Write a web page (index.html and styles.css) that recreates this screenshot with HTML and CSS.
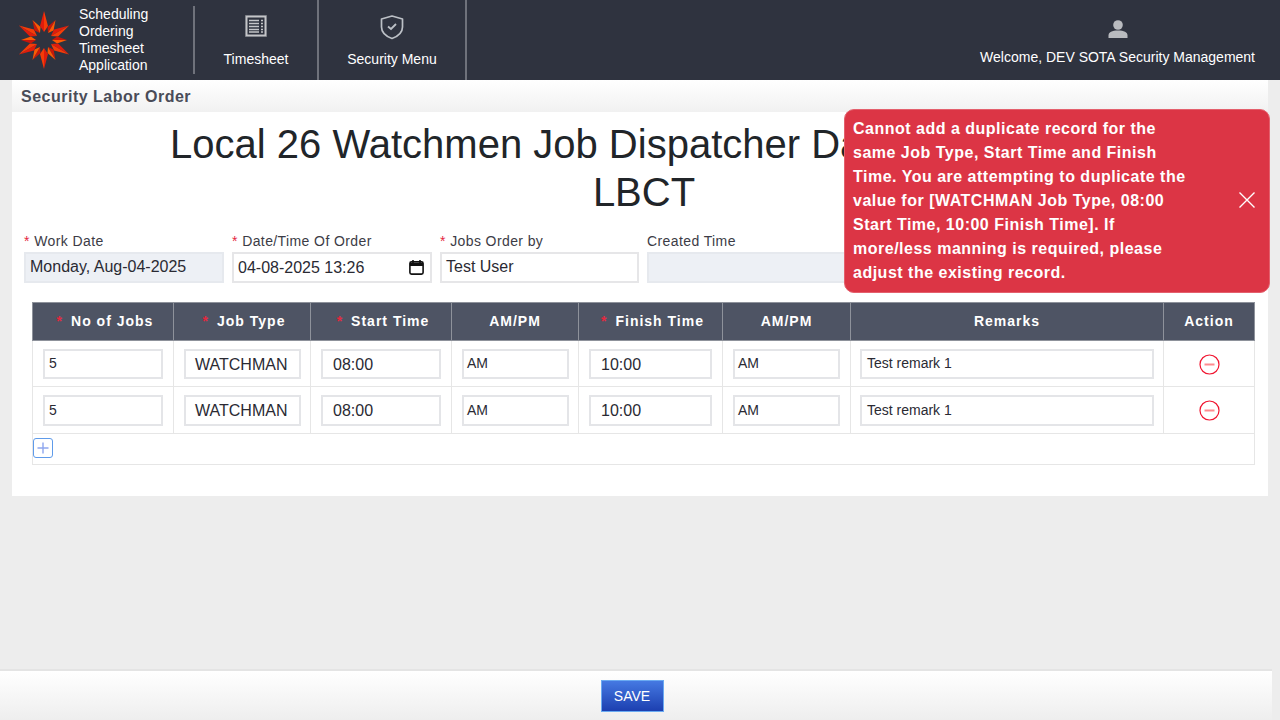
FILE: index.html
```html
<!DOCTYPE html>
<html lang="en">
<head>
<meta charset="utf-8">
<title>Security Labor Order</title>
<link rel="stylesheet" href="styles.css">
</head>
<body>
<div class="app">
  <header class="topbar">
    <div class="brand">
      <svg class="logo" viewBox="-27 -30 54 60" width="54" height="60" aria-hidden="true">
        <defs>
          <g id="spike-long"><polygon points="0,-29 -4,-14 0,-8" fill="#e01c0c"/><polygon points="0,-29 4,-14 0,-8" fill="#f63c08"/></g>
          <g id="spike-mid"><polygon points="0,-23 -3.5,-13 0,-8" fill="#c8160a"/><polygon points="0,-23 3.5,-13 0,-8" fill="#fb5a04"/></g>
        </defs>
        <use href="#spike-long"/>
        <use href="#spike-mid" transform="rotate(30)"/>
        <use href="#spike-long" transform="rotate(60)"/>
        <use href="#spike-mid" transform="rotate(90)"/>
        <use href="#spike-long" transform="rotate(120)"/>
        <use href="#spike-mid" transform="rotate(150)"/>
        <use href="#spike-long" transform="rotate(180)"/>
        <use href="#spike-mid" transform="rotate(210)"/>
        <use href="#spike-long" transform="rotate(240)"/>
        <use href="#spike-mid" transform="rotate(270)"/>
        <use href="#spike-long" transform="rotate(300)"/>
        <use href="#spike-mid" transform="rotate(330)"/>
      </svg>
      <div class="brand-text">Scheduling<br>Ordering<br>Timesheet<br>Application</div>
    </div>
    <nav class="nav">
      <a class="nav-item nav-timesheet">
        <svg class="nav-icon" viewBox="0 0 24 24" width="24" height="24" aria-hidden="true">
          <rect x="2.5" y="2.5" width="19" height="19" fill="none" stroke="#c4c5c8" stroke-width="2"/>
          <rect x="1.5" y="1.5" width="21" height="21" fill="none" stroke="#8f9196" stroke-width="1" stroke-dasharray="1 1"/>
          <path d="M5 6.5h10M5 9.5h10M5 12.5h10M5 15.5h10M5 18h10M17 6.5h2M17 9.5h2M17 12.5h2M17 15.5h2M17 18h2" stroke="#c4c5c8" stroke-width="1.4" fill="none"/>
        </svg>
        <span>Timesheet</span>
      </a>
      <a class="nav-item nav-security">
        <svg class="nav-icon" viewBox="0 0 24 26" width="24" height="26" aria-hidden="true">
          <path d="M12 2 L22.5 5 V13 C22.5 19 17.5 22.5 12 24.5 C6.5 22.5 1.5 19 1.5 13 V5 Z" fill="none" stroke="#bcc0c6" stroke-width="1.7" stroke-linejoin="round"/>
          <path d="M8 12.5 L11 15 L16 10" fill="none" stroke="#bcc0c6" stroke-width="1.8"/>
        </svg>
        <span>Security Menu</span>
      </a>
    </nav>
    <div class="user">
      <svg viewBox="0 0 20 18" width="20" height="18" aria-hidden="true">
        <circle cx="10" cy="5" r="4.8" fill="#b9bbbf"/>
        <path d="M0.5 18 V15.5 C0.5 12 4 10.5 10 10.5 C16 10.5 19.5 12 19.5 15.5 V18 Z" fill="#b9bbbf"/>
      </svg>
      <span>Welcome, DEV SOTA Security Management</span>
    </div>
  </header>

  <main class="main">
    <div class="crumb">Security Labor Order</div>
    <section class="card">
      <h1 class="title">Local 26 Watchmen Job Dispatcher Daily Order Form<br>LBCT</h1>
      <div class="form-row">
        <div class="form-col">
          <label class="label"><span class="req">*</span> Work Date</label>
          <div class="box box-disabled">Monday, Aug-04-2025</div>
        </div>
        <div class="form-col">
          <label class="label"><span class="req">*</span> Date/Time Of Order</label>
          <div class="box box-date">
            <span>04-08-2025 13:26</span>
            <svg viewBox="0 0 15 15" width="15" height="15" aria-hidden="true">
              <rect x="0.9" y="1.9" width="13.2" height="12.2" rx="1.6" fill="none" stroke="#111" stroke-width="1.6"/>
              <path d="M1 3h13v3H1z" fill="#111"/>
              <path d="M4 0v3M11 0v3" stroke="#111" stroke-width="1.6"/>
            </svg>
          </div>
        </div>
        <div class="form-col form-col-narrow">
          <label class="label"><span class="req">*</span> Jobs Order by</label>
          <div class="box">Test User</div>
        </div>
        <div class="form-col">
          <label class="label">Created Time</label>
          <div class="box box-disabled"></div>
        </div>
      </div>

      <table class="grid">
        <colgroup>
          <col class="c-jobs"><col class="c-type"><col class="c-start"><col class="c-ampm1"><col class="c-finish"><col class="c-ampm2"><col class="c-remarks"><col class="c-action">
        </colgroup>
        <thead>
          <tr>
            <th class="th-req"><span class="req">*</span><span class="gap"></span>No of Jobs</th>
            <th class="th-req"><span class="req">*</span><span class="gap"></span>Job Type</th>
            <th class="th-req"><span class="req">*</span><span class="gap"></span>Start Time</th>
            <th>AM/PM</th>
            <th class="th-req"><span class="req">*</span><span class="gap"></span>Finish Time</th>
            <th>AM/PM</th>
            <th>Remarks</th>
            <th>Action</th>
          </tr>
        </thead>
        <tbody>
          <tr>
            <td><div class="cell cell-sm">5</div></td>
            <td class="td-type"><div class="cell cell-lg">WATCHMAN</div></td>
            <td><div class="cell cell-lg">08:00</div></td>
            <td class="td-am"><div class="cell cell-sm cell-am">AM</div></td>
            <td><div class="cell cell-lg">10:00</div></td>
            <td><div class="cell cell-sm cell-am">AM</div></td>
            <td class="td-remark"><div class="cell cell-sm cell-remark">Test remark 1</div></td>
            <td class="td-action">
              <svg viewBox="0 0 21 21" width="21" height="21" aria-hidden="true"><circle cx="10.5" cy="10.5" r="9.5" fill="none" stroke="#f0142f" stroke-width="1.2"/><path d="M5.5 10.5h10" stroke="#ff8a8f" stroke-width="2"/></svg>
            </td>
          </tr>
          <tr>
            <td><div class="cell cell-sm">5</div></td>
            <td class="td-type"><div class="cell cell-lg">WATCHMAN</div></td>
            <td><div class="cell cell-lg">08:00</div></td>
            <td class="td-am"><div class="cell cell-sm cell-am">AM</div></td>
            <td><div class="cell cell-lg">10:00</div></td>
            <td><div class="cell cell-sm cell-am">AM</div></td>
            <td class="td-remark"><div class="cell cell-sm cell-remark">Test remark 1</div></td>
            <td class="td-action">
              <svg viewBox="0 0 21 21" width="21" height="21" aria-hidden="true"><circle cx="10.5" cy="10.5" r="9.5" fill="none" stroke="#f0142f" stroke-width="1.2"/><path d="M5.5 10.5h10" stroke="#ff8a8f" stroke-width="2"/></svg>
            </td>
          </tr>
        </tbody>
        <tfoot>
          <tr>
            <td class="td-add" colspan="8">
              <span class="add-btn">
                <svg viewBox="0 0 12 12" width="12" height="12" aria-hidden="true"><path d="M6 0.5v11M0.5 6h11" stroke="#8ea6ee" stroke-width="1.4"/></svg>
              </span>
            </td>
          </tr>
        </tfoot>
      </table>
    </section>
  </main>

  <footer class="footer">
    <button class="save" type="button">SAVE</button>
  </footer>

  <div class="toast" role="alert">
    <p class="toast-msg">Cannot add a duplicate record for the same Job Type, Start Time and Finish Time. You are attempting to duplicate the value for [WATCHMAN Job Type, 08:00 Start Time, 10:00 Finish Time]. If more/less manning is required, please adjust the existing record.</p>
    <svg class="toast-x" viewBox="0 0 16 16" width="16" height="16" aria-hidden="true"><path d="M0.5 0.5L15.5 15.5M15.5 0.5L0.5 15.5" stroke="#fff" stroke-width="1.4"/></svg>
  </div>
</div>
</body>
</html>
```

FILE: styles.css
```css
* { box-sizing: border-box; }
html, body { margin: 0; padding: 0; height: 100%; overflow: hidden; }
body { font-family: "Liberation Sans", Arial, sans-serif; background: #ededed; color: #212529; }
.app { position: relative; display: flex; flex-direction: column; height: 720px; }

/* Header */
.topbar { display: flex; height: 80px; flex: none; background: #2f333f; color: #fff; font-size: 14px; }
.brand { display: flex; align-items: center; width: 195px; height: 68px; margin-top: 6px; padding-left: 17px; border-right: 2px solid #6f727b; }
.logo { flex: none; margin-top: -1px; }
.brand-text { margin-left: 8px; line-height: 17px; }
.nav { display: flex; }
.nav-item { display: flex; flex-direction: column; align-items: center; height: 80px; padding-top: 14px; border-right: 2px solid #6f727b; color: #fff; }
.nav-item span { margin-top: auto; margin-bottom: 13px; line-height: 16px; }
.nav-timesheet { width: 124px; }
.nav-security { width: 148px; }
.user { margin-left: auto; display: flex; flex-direction: column; align-items: center; padding: 20px 25px 0 0; }
.user span { margin-top: 11px; line-height: 16px; }

/* Main */
.main { flex: 1; min-height: 0; padding: 0 12px; }
.crumb { height: 32px; padding: 8px 0 0 9px; background: linear-gradient(#fff, #f1f1f1); font-size: 16px; line-height: 17px; font-weight: 700; letter-spacing: 0.5px; color: #4a4c58; }
.card { height: 384px; padding: 8px 12px 0; background: #fff; }
.title { margin: 0; padding-left: 8px; text-align: center; font-size: 40px; line-height: 48px; font-weight: 400; }

.form-row { display: flex; gap: 8px; margin-top: 17px; }
.form-col { width: 200px; flex: none; }
.form-col-narrow { width: 199px; }
.label { display: block; font-size: 14px; line-height: 16px; letter-spacing: 0.4px; color: #3c3c46; margin-bottom: 3px; }
.req { color: #e5283f; }
.box { display: flex; align-items: center; height: 31px; padding: 0 6px 2px 4px; border: 2px solid #e6e6e8; background: #fff; font-size: 16px; color: #2a2a33; }
.box-disabled { background: #edf0f5; border-color: #e6e9ee; }
.box-date { justify-content: space-between; padding-right: 6px; padding-bottom: 0; }

/* Table */
.grid { width: 1222px; margin: 19px 0 0 8px; border-collapse: collapse; table-layout: fixed; font-size: 14px; }
.c-jobs { width: 141px; }
.c-type { width: 137px; }
.c-start { width: 141px; }
.c-ampm1 { width: 127px; }
.c-finish { width: 144px; }
.c-ampm2 { width: 128px; }
.c-remarks { width: 313px; }
.c-action { width: 91px; }
.grid th { height: 38px; padding: 0 0 2px; background: #4e5464; border: 1px solid #8e929b; color: #fff; font-size: 14px; font-weight: 700; letter-spacing: 1px; text-align: center; }
.grid th.th-req { padding-left: 4px; }
.grid th .gap { display: inline-block; width: 8px; }
.grid td { height: 46px; padding: 0 10px; border: 1px solid #e6e6e6; }
.grid tbody tr:last-child td { height: 47px; }
.grid td.td-type { padding-right: 9px; }
.grid td.td-am { padding-right: 9px; }
.grid td.td-remark { padding: 0 9px; }
.cell { display: flex; align-items: center; height: 30px; border: 2px solid #e4e5e8; background: #fff; color: #2a2a33; }
.grid tbody tr:last-child .cell { height: 31px; }
.cell-sm { padding-left: 4px; font-size: 14px; }
.grid tbody tr:first-child .cell-sm { padding-bottom: 2px; }
.cell-am { padding-left: 3px; }
.cell-lg { padding: 2px 0 0 10px; font-size: 16px; }
.td-type .cell-lg { padding-left: 9px; }
.cell-remark { padding-left: 5px; font-size: 14px; }
.grid td.td-action { padding-top: 2px; text-align: center; }
.grid tbody tr:last-child td.td-action { padding-top: 0; }
.td-action svg { display: block; margin: 0 auto; }
.grid td.td-add { height: 31px; padding: 4px 0 0; vertical-align: top; }
.add-btn { display: flex; align-items: center; justify-content: center; width: 20px; height: 20px; border: 1px solid #5f9bea; border-radius: 3px; background: #fff; }

/* Footer */
.footer { flex: none; display: flex; justify-content: center; align-items: flex-start; width: 1272px; height: 51px; padding: 9px 8px 0 0; border-top: 2px solid #e4e4e4; background: linear-gradient(#fff, #eee); }
.save { width: 63px; height: 32px; padding: 0; border: 1px solid #6aaaf2; background: linear-gradient(#4579e2, #1c3fb0); color: #fff; font-family: inherit; font-size: 14px; }

/* Toast */
.toast { position: absolute; left: 844px; top: 109px; display: flex; align-items: center; width: 426px; height: 184px; padding: 8px 14px 8px 8px; background: #dc3545; border: 1px solid #e4606d; border-radius: 10px; color: #fff; }
.toast-msg { margin: 0; width: 340px; font-size: 16px; line-height: 24px; font-weight: 700; letter-spacing: 0.5px; }
.toast-x { margin: -2px 0 0 auto; flex: none; }
```
